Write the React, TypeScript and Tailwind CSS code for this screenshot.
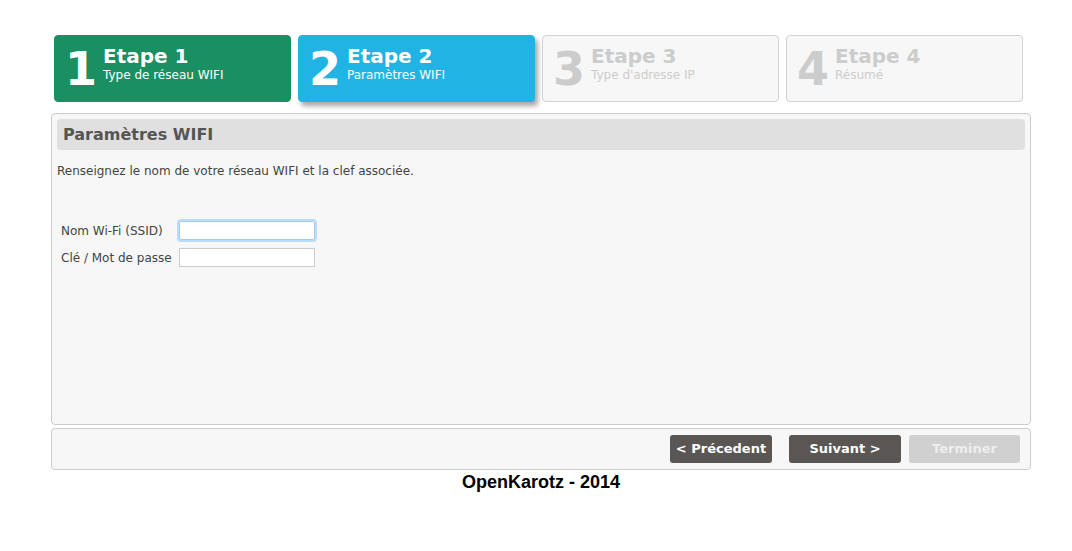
import React from 'react';

const steps = [
  { n: 1, title: 'Etape 1', sub: 'Type de réseau WIFI', state: 'done' },
  { n: 2, title: 'Etape 2', sub: 'Paramètres WIFI', state: 'current' },
  { n: 3, title: 'Etape 3', sub: "Type d'adresse IP", state: 'todo' },
  { n: 4, title: 'Etape 4', sub: 'Résumé', state: 'todo' },
];

function Step({ n, title, sub, state }: { n: number; title: string; sub: string; state: string }) {
  const box =
    state === 'done'
      ? 'bg-[#1a8f61] border-[#1a8f61] text-white'
      : state === 'current'
      ? 'bg-[#1fb4e4] border-[#1fb4e4] text-white shadow-[3px_4px_5px_rgba(0,0,0,0.35)]'
      : 'bg-[#f7f7f7] border-[#d2d2d2] text-[#cccccc]';
  return (
    <div className={`w-[237px] h-[67px] rounded-[4px] border flex items-start pl-[10px] pt-[8px] ${box}`}>
      <div className="text-[46px] font-bold leading-none mt-[2px] w-[38px]">{n}</div>
      <div className="flex flex-col">
        <div className="text-[20px] font-bold leading-[24px]">{title}</div>
        <div className="text-[12px] leading-[14px]">{sub}</div>
      </div>
    </div>
  );
}

export default function App() {
  return (
    <div className="w-[1072px] h-[551px] bg-white" style={{ fontFamily: '"DejaVu Sans", Verdana, sans-serif' }}>
      <div className="ml-[51px] w-[980px] pt-[35px]">
        <div className="flex gap-[7px] pl-[3px]">
          {steps.map((s) => (
            <Step key={s.n} {...s} />
          ))}
        </div>

        <div className="mt-[11px] h-[312px] bg-[#f7f7f7] border border-[#cccccc] rounded-[4px] p-[5px]">
          <div className="h-[31px] bg-[#e0e0e0] rounded-[4px] flex items-center pl-[6px]">
            <h2 className="text-[16px] font-bold text-[#555555]">Paramètres WIFI</h2>
          </div>
          <p className="text-[12px] text-[#444444] mt-[12px]">Renseignez le nom de votre réseau WIFI et la clef associée.</p>
          <div className="mt-[41px] pl-[4px] flex flex-col gap-[8px] text-[12px] text-[#444444]">
            <div className="flex items-center">
              <label className="w-[118px]">Nom Wi-Fi (SSID)</label>
              <input className="w-[136px] h-[19px] bg-white border border-[#a9c9ea] outline outline-2 outline-[#bcdcfb] rounded-[2px]" />
            </div>
            <div className="flex items-center">
              <label className="w-[118px]">Clé / Mot de passe</label>
              <input className="w-[136px] h-[19px] bg-white border border-[#cccccc]" />
            </div>
          </div>
        </div>

        <div className="mt-[3px] h-[42px] bg-[#f7f7f7] border border-[#cccccc] rounded-[4px] flex items-center justify-end pr-[10px] gap-[8px]">
          <button className="w-[102px] h-[28px] rounded-[3px] bg-[#5a5654] text-white text-[13px] font-bold">&lt; Précedent</button>
          <button className="w-[112px] h-[28px] rounded-[3px] bg-[#5a5654] text-white text-[13px] font-bold ml-[9px]">Suivant &gt;</button>
          <button className="w-[111px] h-[28px] rounded-[3px] bg-[#d0d0d0] text-[#eeeeee] text-[13px] font-bold">Terminer</button>
        </div>

        <div className="text-center text-[18px] leading-[22px] mt-[1px] font-bold text-black" style={{ fontFamily: '"Liberation Sans", Arial, sans-serif' }}>
          OpenKarotz - 2014
        </div>
      </div>
    </div>
  );
}
